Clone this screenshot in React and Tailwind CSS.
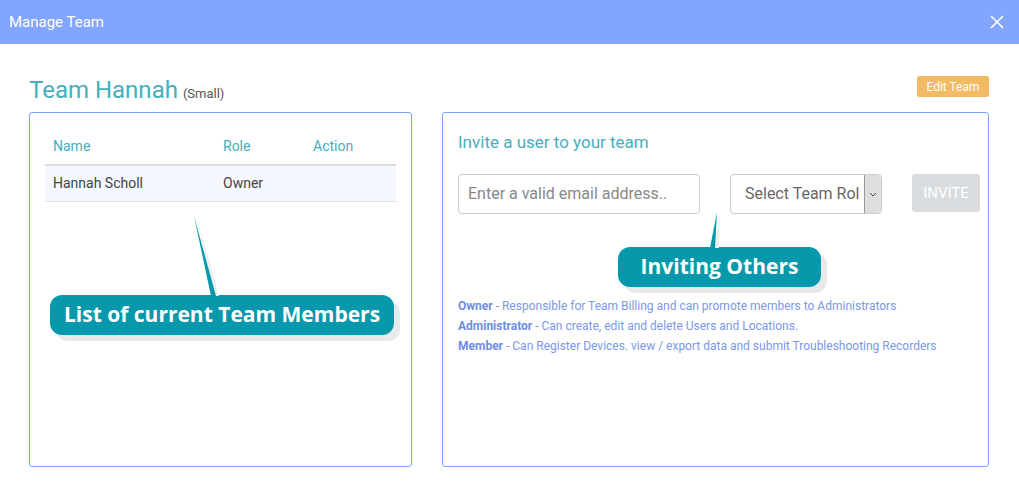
import React from 'react';

const roles = [
  { name: 'Owner', text: 'Responsible for Team Billing and can promote members to Administrators' },
  { name: 'Administrator', text: 'Can create, edit and delete Users and Locations.' },
  { name: 'Member', text: 'Can Register Devices. view / export data and submit Troubleshooting Recorders' },
];

const Callout = ({ children, className }) => (
  <div
    className={`absolute h-[40px] rounded-[12px] bg-[#0898ab] shadow-[6px_6px_0_#e7e9eb] flex items-center justify-center text-white text-[21px] font-bold ${className}`}
    style={{ fontFamily: '"Open Sans", sans-serif' }}
  >
    {children}
  </div>
);

const App = () => {
  return (
    <div className="relative w-[1019px] h-[495px] bg-white overflow-hidden" style={{ fontFamily: 'Roboto, "Liberation Sans", sans-serif' }}>
      {/* Header */}
      <div className="h-[44px] bg-[#82a5ff] flex items-center justify-between pl-[9px] pr-[15px]">
        <span className="text-white text-[15px]">Manage Team</span>
        <svg width="14" height="14" viewBox="0 0 14 14" className="text-white">
          <path d="M1 1L13 13M13 1L1 13" stroke="currentColor" strokeWidth="1.6" fill="none" />
        </svg>
      </div>

      <div className="px-[29px] pt-[32px]">
        {/* Title row */}
        <div className="flex items-end justify-between h-[36px] pr-[1px]">
          <div className="flex items-baseline mb-[9px]">
            <span className="text-[24px] text-[#43b0bd] leading-none">Team Hannah</span>
            <span className="ml-[5px] text-[13px] text-[#555]">(Small)</span>
          </div>
          <button className="h-[21px] w-[72px] mb-[15px] rounded-[2px] bg-[#f2bb63] text-white text-[12px]">Edit Team</button>
        </div>

        {/* Panels */}
        <div className="flex gap-[30px]">
          <div className="relative w-[383px] h-[355px] border border-[#7fa3fd] rounded-[3px] px-[15px] pt-[16px]">
            <table className="w-full text-[14px]">
              <thead>
                <tr className="h-[36px] border-b-2 border-[#dcdcdc] text-[#45afbd] text-left">
                  <th className="font-normal pl-[8px] w-[170px]">Name</th>
                  <th className="font-normal pl-[8px] w-[90px]">Role</th>
                  <th className="font-normal pl-[8px]">Action</th>
                </tr>
              </thead>
              <tbody>
                <tr className="h-[36px] bg-[#f5f8ff] border-b border-[#dde0e5] text-[#444]">
                  <td className="pl-[8px]">Hannah Scholl</td>
                  <td className="pl-[8px]">Owner</td>
                  <td></td>
                </tr>
              </tbody>
            </table>
            <Callout className="left-[20px] top-[182px] w-[344px]">List of current Team Members</Callout>
          </div>

          <div className="relative w-[547px] h-[355px] border border-[#7fa3fd] rounded-[3px] px-[15px] pt-[17px]">
            <div className="text-[17px] text-[#45afbd] leading-[24px]">Invite a user to your team</div>
            <div className="flex items-start mt-[20px]">
              <div className="shrink-0 w-[242px] h-[40px] border border-[#ccc] rounded-[4px] flex items-center px-[9px] text-[16px] text-[#888]">
                Enter a valid email address..
              </div>
              <div className="shrink-0 ml-[30px] w-[152px] h-[40px] border border-[#ccc] rounded-[4px] flex items-center overflow-hidden">
                <span className="flex-1 min-w-0 pl-[14px] text-[16px] text-[#666] whitespace-nowrap overflow-hidden">Select Team Rol</span>
                <div className="shrink-0 w-[17px] h-[38px] bg-[#dedede] border-l border-[#999] flex items-center justify-center">
                  <svg width="8" height="5" viewBox="0 0 8 5">
                    <path d="M1 1L4 4L7 1" stroke="#444" strokeWidth="1" fill="none" />
                  </svg>
                </div>
              </div>
              <button className="shrink-0 ml-[30px] w-[68px] h-[38px] rounded-[3px] bg-[#d9dcdf] text-white text-[15px]">INVITE</button>
            </div>
            <div className="mt-[82px] text-[12px] leading-[20px] text-[#7b97e8]">
              {roles.map((r) => (
                <div key={r.name}>
                  <span className="font-bold text-[#6f8ce3]">{r.name}</span> - {r.text}
                </div>
              ))}
            </div>
            <Callout className="left-[175px] top-[134px] w-[203px]">Inviting Others</Callout>
          </div>
        </div>
      </div>

      {/* Callout pointers */}
      <svg className="absolute inset-0 pointer-events-none" width="1019" height="495">
        <polygon points="197,218 219,296 214,296" fill="#eceeef" />
        <polygon points="194,216 216,296 211,296" fill="#0898ab" />
        <polygon points="720,214 719,248 714,248" fill="#eceeef" />
        <polygon points="717,212 715,248 710,248" fill="#0898ab" />
      </svg>
    </div>
  );
};

export default App;
